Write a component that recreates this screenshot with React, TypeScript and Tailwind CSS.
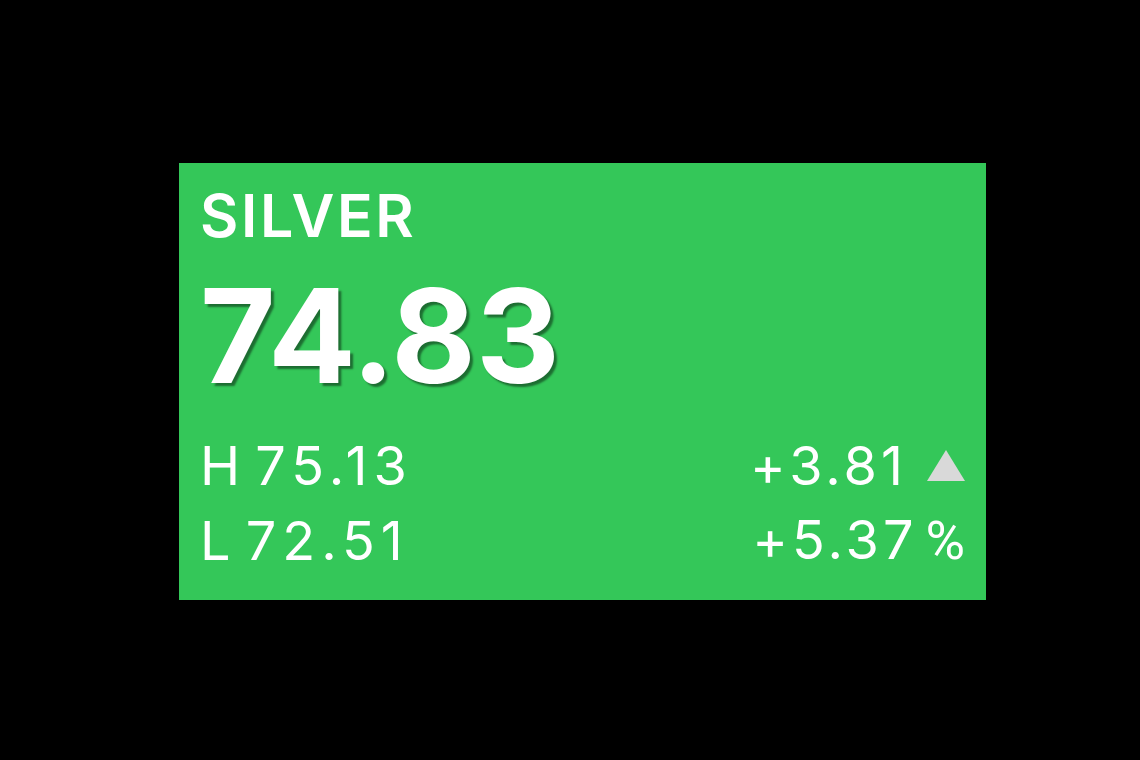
import React from "react";

export default function App() {
  return (
    <div className="w-[1140px] h-[760px] bg-black pl-[179px] pt-[163px]" style={{ fontFamily: "Inter, Roboto, 'Liberation Sans', sans-serif" }}>
      <div className="w-[807px] h-[437px] bg-[#34c759] pl-[21px] pr-[21px] pt-[23px] flex flex-col text-white">
        <div className="text-[59px] leading-[60px] font-semibold tracking-[2.6px]">SILVER</div>
        <div
          className="mt-[24px] text-[130px] leading-[132px] font-bold"
          style={{ textShadow: "3px 3px 2px rgba(0,0,0,0.45)" }}
        >
          74.83
        </div>
        <div className="mt-[27px] flex flex-col text-[54px] leading-[74px] tracking-[4px] -mr-[4px]">
          <div className="flex justify-between items-center">
            <span className="tracking-[6px] [word-spacing:-12px]">H 75.13</span>
            <span className="flex items-center">
              +3.81
              <svg width="38" height="32" viewBox="0 0 38 32" className="ml-[20px] mr-[4px]">
                <polygon points="19,0 38,31 0,31" fill="#d9d9d9" />
              </svg>
            </span>
          </div>
          <div className="flex justify-between items-center">
            <span className="tracking-[6px] [word-spacing:-12px]">L 72.51</span>
            <span className="flex items-baseline">
              +5.37
              <span className="ml-[8px] tracking-[2px] mr-[2px] font-[Roboto,sans-serif]">%</span>
            </span>
          </div>
        </div>
      </div>
    </div>
  );
}
